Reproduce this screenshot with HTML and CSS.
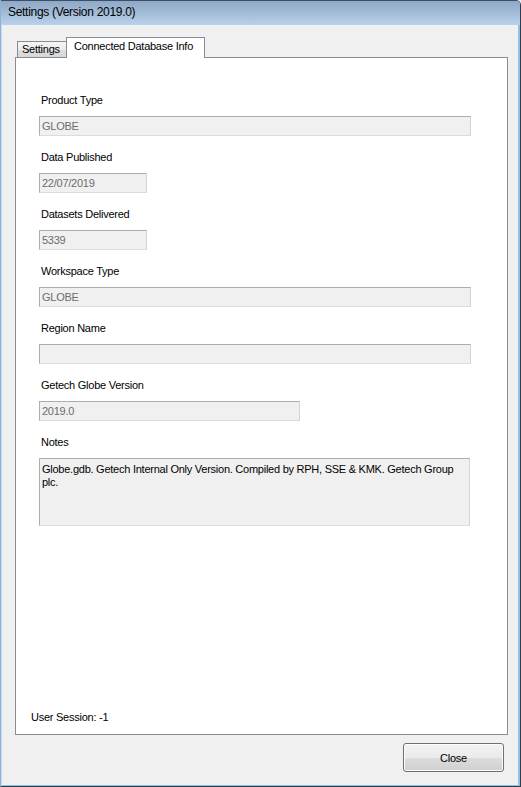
FILE: index.html
```html
<!DOCTYPE html>
<html>
<head>
<meta charset="utf-8">
<title>Settings</title>
<link rel="stylesheet" href="styles.css">
</head>
<body>
<div class="window">
  <div class="titlebar"><span class="title">Settings (Version 2019.0)</span></div>
  <div class="client">
    <div class="tabs">
      <div class="tab inactive">Settings</div>
      <div class="tab active">Connected Database Info</div>
    </div>
    <div class="panel">
      <div class="group">
        <div class="label">Product Type</div>
        <div class="field wide">GLOBE</div>
      </div>
      <div class="group">
        <div class="label">Data Published</div>
        <div class="field short">22/07/2019</div>
      </div>
      <div class="group">
        <div class="label">Datasets Delivered</div>
        <div class="field short">5339</div>
      </div>
      <div class="group">
        <div class="label">Workspace Type</div>
        <div class="field wide">GLOBE</div>
      </div>
      <div class="group">
        <div class="label">Region Name</div>
        <div class="field wide"></div>
      </div>
      <div class="group">
        <div class="label">Getech Globe Version</div>
        <div class="field medium">2019.0</div>
      </div>
      <div class="group">
        <div class="label">Notes</div>
        <div class="notes">Globe.gdb. Getech Internal Only Version. Compiled by RPH, SSE &amp; KMK. Getech Group plc.</div>
      </div>
      <div class="session">User Session: -1</div>
    </div>
    <div class="footer">
      <button class="btn">Close</button>
    </div>
  </div>
</div>
</body>
</html>
```

FILE: styles.css
```css
html, body {
  margin: 0;
  padding: 0;
  background: #f0f0f0;
}
body {
  font-family: "Liberation Sans", Arial, sans-serif;
  font-size: 11px;
  letter-spacing: -0.25px;
  color: #000;
}
.window {
  width: 521px;
  height: 787px;
  box-sizing: border-box;
  display: flex;
  flex-direction: column;
  border-top: 1px solid #3c4f63;
  border-right: 1px solid #2d3e50;
  border-bottom: 1px solid #2d3e50;
  border-left: 1px solid #8fb2d6;
  border-top-right-radius: 5px;
  box-shadow: inset 1px 0 0 #c6dbef, inset -2px 0 0 #8cc2ea, inset 0 -1px 0 #8cc2ea;
  background: #f0f0f0;
  overflow: hidden;
}
.titlebar {
  height: 24px;
  flex: none;
  background: linear-gradient(to bottom, #8ea8c5 0%, #a3bcd8 50%, #b9d1ea 100%);
  display: flex;
  align-items: center;
  padding-left: 7px;
}
.title {
  font-family: "Liberation Sans", Arial, sans-serif;
  font-size: 12px;
  letter-spacing: -0.3px;
  color: #000;
  position: relative;
  top: -1px;
}
.client {
  flex: 1;
  display: flex;
  flex-direction: column;
  padding: 12px 12px 14px 14px;
  min-height: 0;
}
.tabs {
  display: flex;
  align-items: flex-end;
  height: 20px;
  padding-left: 2px;
  position: relative;
  z-index: 1;
}
.tab {
  box-sizing: border-box;
  border: 1px solid #898c95;
  border-bottom: none;
  line-height: 13px;
  white-space: nowrap;
}
.tab.inactive {
  height: 16px;
  width: 49px;
  padding: 1px 0 0 4px;
  background: linear-gradient(to bottom, #f5f5f5 0%, #ebebeb 50%, #dedede 51%, #d8d8d8 100%);
  border-right: none;
}
.tab.active {
  height: 21px;
  margin-bottom: -1px;
  padding: 2px 7px 0 7px;
  background: #fff;
  width: 139px;
}
.panel {
  flex: 1;
  background: #fff;
  border: 1px solid #898c95;
  display: flex;
  flex-direction: column;
  padding: 36px 10px 10px 23px;
  min-height: 0;
}
.group {
  display: flex;
  flex-direction: column;
  align-items: flex-start;
  margin-bottom: 15px;
}
.label {
  line-height: 13px;
  height: 13px;
  padding-left: 2px;
  margin-bottom: 9px;
}
.field, .notes {
  box-sizing: border-box;
  background: #f0f0f0;
  border: 1px solid #adadad;
  border-right-color: #d4d4d4;
  border-bottom-color: #dcdcdc;
  color: #6d6d6d;
  line-height: 13px;
  padding: 3px 2px;
}
.field {
  height: 20px;
}
.field.wide { width: 432px; }
.field.short { width: 108px; }
.field.medium { width: 261px; }
.notes {
  width: 431px;
  height: 68px;
  color: #000;
  padding: 4px 2px;
}
.session {
  margin-top: auto;
  margin-left: -8px;
  line-height: 13px;
}
.footer {
  display: flex;
  justify-content: flex-end;
  padding-top: 8px;
  padding-right: 4px;
}
.btn {
  width: 101px;
  height: 29px;
  box-sizing: border-box;
  border: 1px solid #707070;
  border-radius: 3px;
  background: linear-gradient(to bottom, #f2f2f2 0%, #ebebeb 50%, #dddddd 51%, #cfcfcf 100%);
  box-shadow: inset 0 0 0 1px #fcfcfc;
  font-family: "Liberation Sans", Arial, sans-serif;
  font-size: 11px;
  letter-spacing: -0.25px;
  color: #000;
  padding: 0;
}
```
